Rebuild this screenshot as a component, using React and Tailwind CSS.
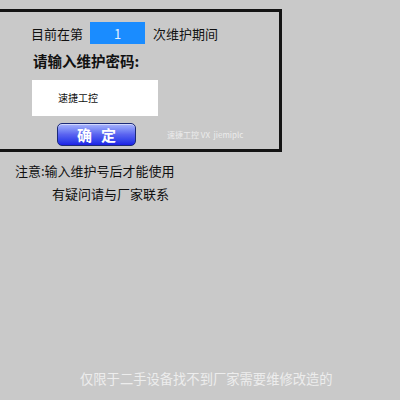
export default function App() {
  const cjk = { fontFamily: '"Noto Sans CJK SC", "Noto Sans", sans-serif' };
  return (
    <div
      className="w-[400px] h-[400px] bg-[#c9c9c9] overflow-hidden text-[#111]"
      style={cjk}
    >
      {/* maintenance panel */}
      <div className="ml-[-3px] mt-[9px] w-[285px] h-[143px] border-[3px] border-[#141414] flex flex-col">
        <div className="mt-[10px] h-[22px] flex items-center pl-[31px] text-[13px] leading-none">
          <span>目前在第</span>
          <div className="ml-[7px] w-[55px] h-[22px] bg-[#1a8cff] flex items-center justify-center text-[#e8f2ff] text-[13px]">
            1
          </div>
          <span className="ml-[8px]">次维护期间</span>
        </div>
        <div className="mt-[8px] pl-[33px] h-[18px] flex items-center text-[14.5px] font-bold leading-none">
          请输入维护密码:
        </div>
        <div className="mt-[10px] ml-[32px] w-[126px] h-[36px] bg-white flex items-center pl-[26px] text-[10px] leading-none">
          速捷工控
        </div>
        <div className="mt-[7px] flex items-center">
          <div className="ml-[57px] w-[79px] h-[23px] rounded-[5px] border border-[#1b2a78] bg-gradient-to-b from-[#a9b4fb] via-[#5a63f0] to-[#1d1ee6] flex items-center justify-center gap-[9px] text-white font-bold text-[15px] leading-none shadow-[inset_0_1px_0_rgba(255,255,255,0.5)]">
            <span>确</span>
            <span>定</span>
          </div>
          <span className="ml-[31px] text-[8px] text-[#ececec] leading-none">
            速捷工控 VX&nbsp; jiemiplc
          </span>
        </div>
      </div>

      {/* notes */}
      <div className="mt-[9px] pl-[15px] h-[18px] flex items-center text-[13px] leading-none">
        注意:输入维护号后才能使用
      </div>
      <div className="mt-[5px] pl-[52px] h-[18px] flex items-center text-[13px] leading-none">
        有疑问请与厂家联系
      </div>

      <div className="mt-[168px] pl-[80px] h-[18px] flex items-center text-[13.3px] text-[#ededed] leading-none">
        仅限于二手设备找不到厂家需要维修改造的
      </div>
    </div>
  );
}
